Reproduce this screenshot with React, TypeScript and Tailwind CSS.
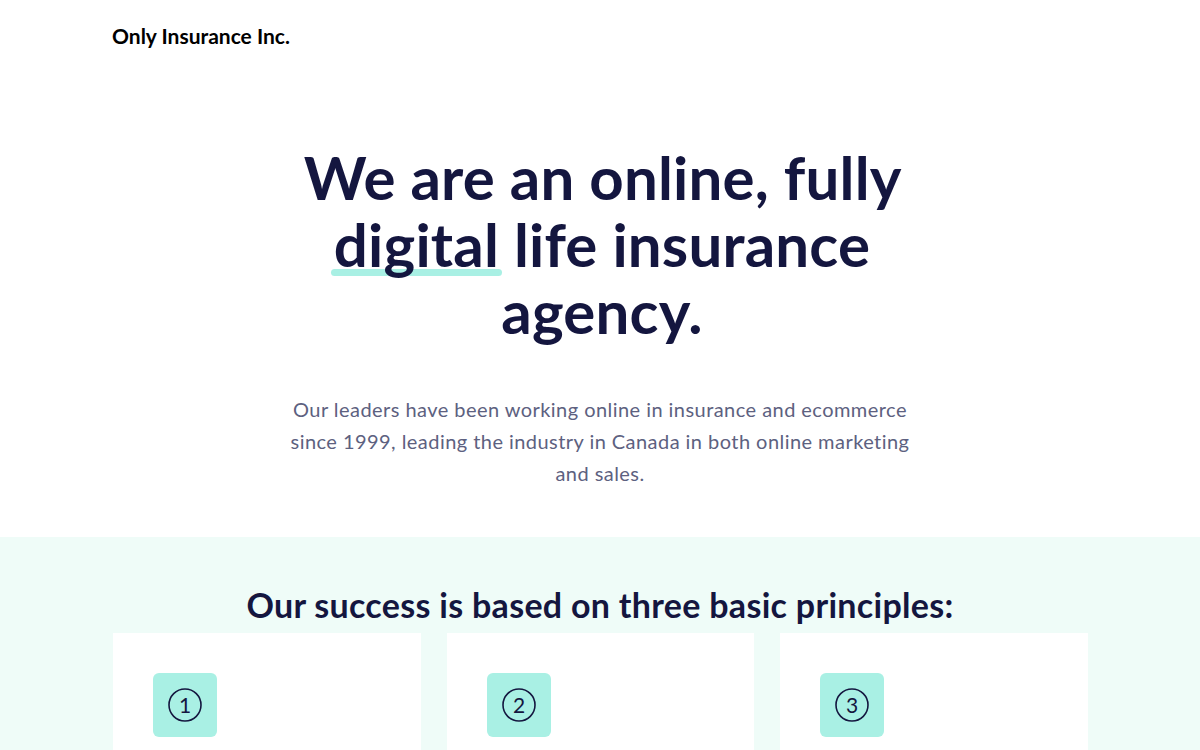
import React from 'react';

const principles = [1, 2, 3];

function NumberIcon({ n }: { n: number }) {
  return (
    <svg width="36" height="36" viewBox="0 0 36 36" fill="none">
      <circle cx="18" cy="18" r="16" stroke="#14163f" strokeWidth="1.6" />
      <text
        x="18"
        y="25.5"
        textAnchor="middle"
        fontSize="21"
        fontFamily="Lato, sans-serif"
        fill="#14163f"
      >
        {n}
      </text>
    </svg>
  );
}

export default function App() {
  return (
    <div className="min-h-screen bg-white font-['Lato',sans-serif] text-[#14163f]">
      {/* Header */}
      <header className="mx-auto max-w-[976px] pt-[23px]">
        <div className="text-[21px] font-bold leading-[26px] text-black">Only Insurance Inc.</div>
      </header>

      {/* Hero */}
      <section className="mx-auto flex max-w-[976px] flex-col items-center pt-[95px] pb-[48px]">
        <h1 className="max-w-[660px] pl-[4px] text-center text-[60px] font-bold leading-[67px] tracking-[0.2px]">
          We are an online, fully{' '}
          <span className="relative inline-block">
            <span className="absolute left-[-3px] right-[-3px] bottom-[2px] h-[7px] rounded-full bg-[#a9f0e4]" />
            <span className="relative">digital</span>
          </span>{' '}
          life insurance agency.
        </h1>
        <p className="mt-[48px] max-w-[640px] text-center text-[20px] leading-[32px] tracking-[0.45px] text-[#5d6180]">
          Our leaders have been working online in insurance and ecommerce since 1999, leading the industry in
          Canada in both online marketing and sales.
        </p>
      </section>

      {/* Principles */}
      <section className="bg-[#effcf8] pt-[46px]">
        <div className="mx-auto max-w-[976px]">
          <h2 className="text-center text-[34px] font-bold leading-[44px] tracking-[0.3px]">
            Our success is based on three basic principles:
          </h2>
          <div className="mt-[6px] grid grid-cols-3 gap-[26px] pl-px">
            {principles.map((n) => (
              <div key={n} className="h-[117px] bg-white px-[40px] pt-[40px]">
                <div className="flex h-[64px] w-[64px] items-center justify-center rounded-[6px] bg-[#a9f0e4]">
                  <NumberIcon n={n} />
                </div>
              </div>
            ))}
          </div>
        </div>
      </section>
    </div>
  );
}
